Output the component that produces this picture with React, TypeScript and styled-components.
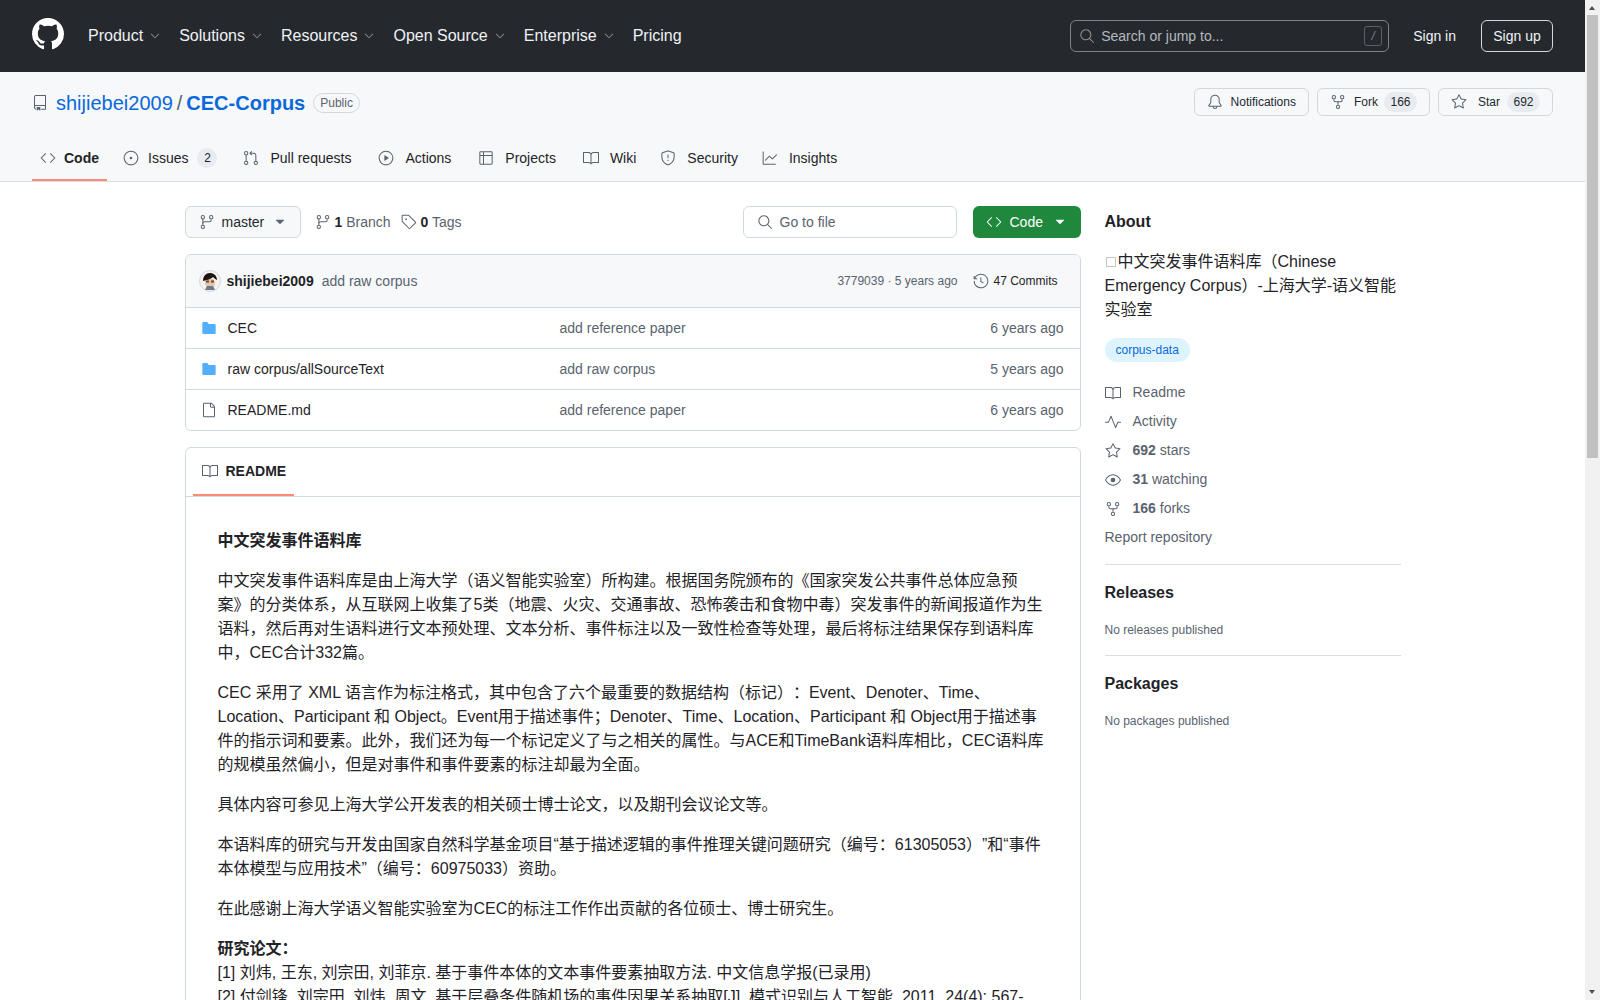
import React from "react";
import styled, { createGlobalStyle } from "styled-components";
import {
  GoBell, GoBook, GoChevronDown, GoCode, GoEye, GoFile, GoFileDirectoryFill, GoGitBranch,
  GoGitPullRequest, GoGraph, GoHistory, GoIssueOpened, GoPlay, GoPulse, GoRepo,
  GoRepoForked, GoSearch, GoShield, GoStar, GoTable, GoTag, GoTriangleDown,
} from "react-icons/go";

const GlobalStyle = createGlobalStyle`
  body {
    margin: 0;
    background: #fff;
    color: #1f2328;
    font-family: "Liberation Sans", "Noto Sans CJK SC", sans-serif;
    font-size: 14px;
    line-height: 1.5;
    text-spacing-trim: space-all;
  }
  * { box-sizing: border-box; }
`;

const Page = styled.div`
  padding-right: 15px;
`;

// the browser's scrollbar does not show in the capture, so it is drawn over the page edge
const ScrollTrack = styled.div`
  position: fixed;
  top: 0;
  right: 0;
  bottom: 0;
  width: 15px;
  background: #f1f1f1;
`;

const ScrollThumb = styled.div`
  position: absolute;
  top: 15px;
  left: 2px;
  width: 11px;
  height: 443px;
  background: #c1c1c1;
`;

const ScrollArrow = styled.div<{ $down?: boolean }>`
  position: absolute;
  left: 4px;
  ${(p) => (p.$down ? "bottom: 6px;" : "top: 6px;")}
  border-left: 3.5px solid transparent;
  border-right: 3.5px solid transparent;
  ${(p) => (p.$down ? "border-top" : "border-bottom")}: 4px solid #505050;
`;

const TopBar = styled.header`
  display: flex;
  align-items: center;
  height: 72px;
  padding: 0 32px;
  background: #25292e;
  color: #fff;
`;

const Logo = styled.svg`
  flex: none;
  width: 32px;
  height: 32px;
  margin-right: 24px;
  margin-top: -4px;
  fill: #fff;
`;

const TopNav = styled.nav`
  display: flex;
  align-items: center;
  gap: 17px;
  margin-top: -1px;
  flex: 1;
`;

const TopNavItem = styled.span`
  display: flex;
  align-items: center;
  font-size: 16px;
  color: #f0f2f4;
  svg {
    margin-left: 5px;
    color: #8b9198;
  }
`;

const SearchBox = styled.div`
  display: flex;
  align-items: center;
  width: 319px;
  height: 32px;
  padding: 0 6px 0 8px;
  border: 1px solid #7d838a;
  border-radius: 6px;
  color: #b4b9bf;
  svg { margin-right: 6px; color: #8b9198; }
`;

const SearchText = styled.span`
  flex: 1;
`;

const SlashKey = styled.span`
  display: flex;
  align-items: center;
  justify-content: center;
  width: 18px;
  height: 20px;
  border: 1px solid #5a6067;
  border-radius: 3px;
  font-size: 12px;
  font-style: italic;
  color: #7d838a;
`;

const SignIn = styled.span`
  margin: 0 25px 0 24px;
  color: #f0f2f4;
`;

const SignUp = styled.span`
  display: flex;
  align-items: center;
  justify-content: center;
  width: 72px;
  height: 32px;
  border: 1px solid #d5d8db;
  border-radius: 6px;
  color: #f0f2f4;
`;

const RepoHead = styled.div`
  padding: 16px 32px 0;
  background: #f6f8fa;
  border-bottom: 1px solid #d8dee4;
`;

const RepoTitleRow = styled.div`
  display: flex;
  align-items: center;
  height: 28px;
  margin-bottom: 18px;
`;

const RepoIcon = styled.span`
  display: flex;
  width: 24px;
  margin-top: 2px;
  color: #59636e;
`;

const OwnerLink = styled.a`
  margin-top: 2px;
  font-size: 20px;
  color: #0969da;
`;

const Slash = styled.span`
  margin: 2px 4px 0;
  font-size: 20px;
  color: #59636e;
`;

const RepoLink = styled(OwnerLink)`
  font-weight: 700;
`;

const PublicBadge = styled.span`
  margin: 2px 0 0 8px;
  padding: 0 6px;
  height: 20px;
  line-height: 18px;
  border: 1px solid #d1d9e0;
  border-radius: 10px;
  font-size: 12px;
  color: #59636e;
`;

const RepoActions = styled.div`
  display: flex;
  gap: 8px;
  margin-left: auto;
`;

const SmallButton = styled.span<{ $gap: number }>`
  display: flex;
  align-items: center;
  height: 28px;
  padding: 0 12px;
  border: 1px solid #d1d9e0;
  border-radius: 6px;
  background: #f6f8fa;
  font-size: 12px;
  color: #25292e;
  svg {
    margin-right: ${(p) => p.$gap}px;
    color: #59636e;
  }
`;

const SmallCount = styled.span<{ $left: number }>`
  min-width: 33px;
  height: 20px;
  margin-left: ${(p) => p.$left}px;
  padding: 0 6px;
  line-height: 20px;
  text-align: center;
  border-radius: 10px;
  background: #e8ebef;
`;

const Tabs = styled.nav`
  display: flex;
  gap: 8px;
  height: 47px;
`;

const Tab = styled.span<{ $active?: boolean; $gap?: number; $right?: number }>`
  display: flex;
  align-items: center;
  gap: ${(p) => p.$gap ?? 11}px;
  padding: 3px ${(p) => p.$right ?? 11}px 0 8px;
  font-weight: ${(p) => (p.$active ? 700 : 400)};
  border-bottom: 2px solid ${(p) => (p.$active ? "#fd8c73" : "transparent")};
  svg { color: #59636e; }
`;

const Counter = styled.span`
  min-width: 20px;
  height: 20px;
  margin-right: -2px;
  line-height: 20px;
  text-align: center;
  border-radius: 10px;
  background: #e8ebef;
  font-size: 12px;
`;

const Container = styled.div`
  display: grid;
  grid-template-columns: 896px 296px;
  gap: 24px;
  max-width: 1280px;
  margin: 0 auto;
  padding: 24px 32px;
`;

const Main = styled.main`
  min-width: 0;
`;

const Toolbar = styled.div`
  display: flex;
  align-items: center;
  height: 32px;
  margin-bottom: 16px;
`;

const BranchButton = styled.span`
  display: flex;
  align-items: center;
  width: 116px;
  height: 32px;
  padding: 0 12px 0 13px;
  border: 1px solid #d1d9e0;
  border-radius: 6px;
  background: #f6f8fa;
  color: #25292e;
  svg { color: #59636e; flex: none; }
`;

const BranchLabel = styled.span`
  margin: 0 8px 0 7px;
`;

const MetaLink = styled.span<{ $left: number }>`
  display: flex;
  align-items: center;
  margin-left: ${(p) => p.$left}px;
  color: #59636e;
  white-space: pre;
  svg { margin-right: 4px; }
  b { color: #1f2328; }
`;

const FileSearch = styled.div`
  display: flex;
  align-items: center;
  gap: 7px;
  width: 214px;
  height: 32px;
  margin-left: auto;
  padding-left: 13px;
  border: 1px solid #d1d9e0;
  border-radius: 6px;
  color: #59636e;
`;

const CodeButton = styled.span`
  display: flex;
  align-items: center;
  width: 108px;
  height: 32px;
  margin-left: 16px;
  padding-left: 13px;
  border-radius: 6px;
  background: #1f883d;
  color: #fff;
  span { margin: 0 9px 0 8px; }
`;

const Box = styled.div`
  border: 1px solid #d1d9e0;
  border-radius: 6px;
  overflow: hidden;
`;

const CommitHead = styled.div`
  display: flex;
  align-items: center;
  height: 52px;
  padding: 0 16px 0 13px;
  background: #f6f8fa;
`;

const Avatar = styled.svg`
  flex: none;
  width: 22px;
  height: 22px;
  margin-right: 6px;
`;

const Author = styled.span`
  font-weight: 700;
  margin-right: 8px;
`;

const CommitMessage = styled.span`
  color: #59636e;
`;

const CommitMeta = styled.span`
  margin-left: auto;
  margin-right: 16px;
  font-size: 12px;
  color: #59636e;
`;

const Commits = styled.span`
  display: flex;
  align-items: center;
  gap: 4px;
  margin-right: 6px;
  font-size: 12px;
  svg { color: #59636e; }
`;

const FileRow = styled.div`
  display: grid;
  grid-template-columns: 359px 1fr auto;
  align-items: center;
  height: 41px;
  padding: 0 16px 0 15px;
  border-top: 1px solid #d1d9e0;
`;

const FileName = styled.span`
  display: flex;
  align-items: center;
  gap: 11px;
`;

const FolderIcon = styled(GoFileDirectoryFill)`
  color: #54aeff;
`;

const PlainFileIcon = styled(GoFile)`
  color: #59636e;
`;

const FileText = styled.span`
  color: #59636e;
`;

const ReadmeBox = styled(Box)`
  margin-top: 16px;
`;

const ReadmeTabs = styled.div`
  height: 49px;
  padding: 0 7px;
  border-bottom: 1px solid #d1d9e0;
`;

const ReadmeTab = styled.span`
  display: flex;
  align-items: center;
  gap: 8px;
  width: 101px;
  height: 48px;
  padding-left: 9px;
  font-weight: 700;
  border-bottom: 2px solid #fd8c73;
  svg { color: #59636e; }
`;

const ReadmeBody = styled.article`
  padding: 32px;
  font-size: 16px;
  line-height: 24px;
  color: #1f2328;
  p { margin: 0 0 16px; }
`;

const Aside = styled.aside`
  padding-top: 6px;
`;

const Section = styled.section<{ $first?: boolean }>`
  padding: ${(p) => (p.$first ? "0 0 16px" : "18px 0 16px")};
  border-bottom: 1px solid #d8dee4;
  &:last-child { border-bottom: 0; }
`;

const SectionTitle = styled.h2`
  margin: 0;
  font-size: 16px;
  line-height: 20px;
  font-weight: 700;
`;

const Description = styled.p`
  margin: 18px 0 16px;
  font-size: 16px;
  line-height: 24px;
`;

const MissingGlyph = styled.span`
  display: inline-block;
  width: 10px;
  height: 10px;
  margin: 0 2px 0 1px;
  border: 1px solid #c6c6c6;
`;

const Topic = styled.span`
  display: inline-block;
  height: 24px;
  padding: 0 11px;
  line-height: 24px;
  border-radius: 12px;
  background: #ddf4ff;
  font-size: 12px;
  color: #0969da;
`;

const MetaRows = styled.div`
  display: flex;
  flex-direction: column;
  gap: 8px;
  margin-top: 20px;
  color: #59636e;
`;

const MetaRow = styled.div`
  display: flex;
  align-items: center;
  gap: 12px;
  height: 21px;
  b { font-weight: 700; }
`;

const EmptyNote = styled.p`
  margin: 18px 0 0;
  font-size: 12px;
  line-height: 18px;
  color: #59636e;
`;

const navItems = ["Product", "Solutions", "Resources", "Open Source", "Enterprise"];

const tabs = [
  { label: "Pull requests", icon: <GoGitPullRequest size={16} /> },
  { label: "Actions", icon: <GoPlay size={16} /> },
  { label: "Projects", icon: <GoTable size={16} /> },
  { label: "Wiki", icon: <GoBook size={16} />, right: 8 },
  { label: "Security", icon: <GoShield size={16} />, right: 8 },
  { label: "Insights", icon: <GoGraph size={16} /> },
];

const files = [
  { name: "CEC", message: "add reference paper", age: "6 years ago", folder: true },
  { name: "raw corpus/allSourceText", message: "add raw corpus", age: "5 years ago", folder: true },
  { name: "README.md", message: "add reference paper", age: "6 years ago", folder: false },
];

const App: React.FC = () => (
  <Page>
    <GlobalStyle />
    <TopBar>
      <Logo viewBox="0 0 16 16">
        <path d="M8 0c4.42 0 8 3.58 8 8a8.013 8.013 0 0 1-5.45 7.59c-.4.08-.55-.17-.55-.38 0-.27.01-1.13.01-2.2 0-.75-.25-1.23-.54-1.48 1.78-.2 3.65-.88 3.65-3.95 0-.88-.31-1.59-.82-2.15.08-.2.36-1.02-.08-2.12 0 0-.67-.22-2.2.82-.64-.18-1.32-.27-2-.27-.68 0-1.36.09-2 .27-1.53-1.03-2.2-.82-2.2-.82-.44 1.1-.16 1.92-.08 2.12-.51.56-.82 1.28-.82 2.15 0 3.06 1.86 3.75 3.64 3.95-.23.2-.44.55-.51 1.07-.46.21-1.61.55-2.33-.66-.15-.24-.6-.83-1.23-.82-.67.01-.27.38.01.53.34.19.73.9.82 1.13.16.45.68 1.31 2.69.94 0 .67.01 1.3.01 1.49 0 .21-.15.45-.55.38A7.995 7.995 0 0 1 0 8c0-4.42 3.58-8 8-8Z" />
      </Logo>
      <TopNav>
        {navItems.map((item) => (
          <TopNavItem key={item}>{item}<GoChevronDown size={14} /></TopNavItem>
        ))}
        <TopNavItem>Pricing</TopNavItem>
      </TopNav>
      <SearchBox>
        <GoSearch size={16} />
        <SearchText>Search or jump to...</SearchText>
        <SlashKey>/</SlashKey>
      </SearchBox>
      <SignIn>Sign in</SignIn>
      <SignUp>Sign up</SignUp>
    </TopBar>

    <RepoHead>
      <RepoTitleRow>
        <RepoIcon><GoRepo size={16} /></RepoIcon>
        <OwnerLink>shijiebei2009</OwnerLink>
        <Slash>/</Slash>
        <RepoLink>CEC-Corpus</RepoLink>
        <PublicBadge>Public</PublicBadge>
        <RepoActions>
          <SmallButton $gap={8}><GoBell size={16} />Notifications</SmallButton>
          <SmallButton $gap={8}><GoRepoForked size={16} />Fork<SmallCount $left={6}>166</SmallCount></SmallButton>
          <SmallButton $gap={11}><GoStar size={16} />Star<SmallCount $left={7}>692</SmallCount></SmallButton>
        </RepoActions>
      </RepoTitleRow>
      <Tabs>
        <Tab $active $gap={8} $right={8}><GoCode size={16} />Code</Tab>
        <Tab $gap={9} $right={12}><GoIssueOpened size={16} />Issues<Counter>2</Counter></Tab>
        {tabs.map((tab) => (
          <Tab key={tab.label} $right={tab.right}>{tab.icon}{tab.label}</Tab>
        ))}
      </Tabs>
    </RepoHead>

    <Container>
      <Main>
        <Toolbar>
          <BranchButton>
            <GoGitBranch size={16} />
            <BranchLabel>master</BranchLabel>
            <GoTriangleDown size={16} />
          </BranchButton>
          <MetaLink $left={14}><GoGitBranch size={16} /><b>1</b> Branch</MetaLink>
          <MetaLink $left={10}><GoTag size={16} /><b>0</b> Tags</MetaLink>
          <FileSearch><GoSearch size={16} />Go to file</FileSearch>
          <CodeButton>
            <GoCode size={16} />
            <span>Code</span>
            <GoTriangleDown size={16} />
          </CodeButton>
        </Toolbar>

        <Box>
          <CommitHead>
            <Avatar viewBox="0 0 22 22">
              <circle cx="11" cy="11" r="10.5" fill="#f4f1ee" stroke="#d1d9e0" />
              <ellipse cx="11" cy="13" rx="5" ry="5" fill="#e8c4a4" />
              <path d="M4 11c0-5 3-8 7-8s7 3 7 7c-2-1-3-2-4-3-2 2-6 3-10 4z" fill="#1d1310" />
              <path d="M8 16h6l2 4H6z" fill="#6c7a8c" />
              <rect x="7" y="10.5" width="3" height="2" fill="#5b4a3e" />
              <rect x="12" y="10.5" width="3" height="2" fill="#5b4a3e" />
            </Avatar>
            <Author>shijiebei2009</Author>
            <CommitMessage>add raw corpus</CommitMessage>
            <CommitMeta>3779039 · 5 years ago</CommitMeta>
            <Commits><GoHistory size={16} />47 Commits</Commits>
          </CommitHead>
          {files.map((file) => (
            <FileRow key={file.name}>
              <FileName>
                {file.folder ? <FolderIcon size={16} /> : <PlainFileIcon size={16} />}
                {file.name}
              </FileName>
              <FileText>{file.message}</FileText>
              <FileText>{file.age}</FileText>
            </FileRow>
          ))}
        </Box>

        <ReadmeBox>
          <ReadmeTabs>
            <ReadmeTab><GoBook size={16} />README</ReadmeTab>
          </ReadmeTabs>
          <ReadmeBody>
            <p><strong>中文突发事件语料库</strong></p>
            <p>中文突发事件语料库是由上海大学（语义智能实验室）所构建。根据国务院颁布的《国家突发公共事件总体应急预案》的分类体系，从互联网上收集了5类（地震、火灾、交通事故、恐怖袭击和食物中毒）突发事件的新闻报道作为生语料，然后再对生语料进行文本预处理、文本分析、事件标注以及一致性检查等处理，最后将标注结果保存到语料库中，CEC合计332篇。</p>
            <p>CEC 采用了 XML 语言作为标注格式，其中包含了六个最重要的数据结构（标记）：Event、Denoter、Time、Location、Participant 和 Object。Event用于描述事件；Denoter、Time、Location、Participant 和 Object用于描述事件的指示词和要素。此外，我们还为每一个标记定义了与之相关的属性。与ACE和TimeBank语料库相比，CEC语料库的规模虽然偏小，但是对事件和事件要素的标注却最为全面。</p>
            <p>具体内容可参见上海大学公开发表的相关硕士博士论文，以及期刊会议论文等。</p>
            <p>本语料库的研究与开发由国家自然科学基金项目“基于描述逻辑的事件推理关键问题研究（编号：61305053）”和“事件本体模型与应用技术”（编号：60975033）资助。</p>
            <p>在此感谢上海大学语义智能实验室为CEC的标注工作作出贡献的各位硕士、博士研究生。</p>
            <p>
              <strong>研究论文：</strong><br />
              [1] 刘炜, 王东, 刘宗田, 刘菲京. 基于事件本体的文本事件要素抽取方法. 中文信息学报(已录用)<br />
              [2] 付剑锋, 刘宗田, 刘炜, 周文. 基于层叠条件随机场的事件因果关系抽取[J]. 模式识别与人工智能, 2011, 24(4): 567-573.
            </p>
          </ReadmeBody>
        </ReadmeBox>
      </Main>

      <Aside>
        <Section $first>
          <SectionTitle>About</SectionTitle>
          <Description>
            <MissingGlyph />中文突发事件语料库（Chinese Emergency Corpus）-上海大学-语义智能实验室
          </Description>
          <Topic>corpus-data</Topic>
          <MetaRows>
            <MetaRow><GoBook size={16} />Readme</MetaRow>
            <MetaRow><GoPulse size={16} />Activity</MetaRow>
            <MetaRow><GoStar size={16} /><span><b>692</b> stars</span></MetaRow>
            <MetaRow><GoEye size={16} /><span><b>31</b> watching</span></MetaRow>
            <MetaRow><GoRepoForked size={16} /><span><b>166</b> forks</span></MetaRow>
            <MetaRow>Report repository</MetaRow>
          </MetaRows>
        </Section>
        <Section>
          <SectionTitle>Releases</SectionTitle>
          <EmptyNote>No releases published</EmptyNote>
        </Section>
        <Section>
          <SectionTitle>Packages</SectionTitle>
          <EmptyNote>No packages published</EmptyNote>
        </Section>
      </Aside>
    </Container>

    <ScrollTrack>
      <ScrollArrow />
      <ScrollThumb />
      <ScrollArrow $down />
    </ScrollTrack>
  </Page>
);

export default App;
